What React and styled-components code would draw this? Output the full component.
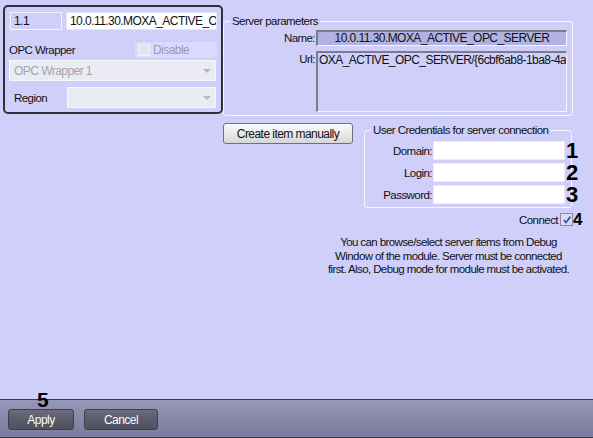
import React from "react";
import styled, { createGlobalStyle } from "styled-components";

const UI_FONT = `"Liberation Sans", Arial, sans-serif`;

const GlobalStyle = createGlobalStyle`
  html, body {
    margin: 0;
    padding: 0;
    background: #cfcff9;
  }
  body {
    font-family: ${UI_FONT};
    font-size: 11.5px;
    letter-spacing: -0.55px;
    color: #111;
  }
`;

const Page = styled.div`
  display: flex;
  flex-direction: column;
  width: 593px;
  height: 438px;
  background: #cfcff9;
  overflow: hidden;
`;

const Main = styled.div`
  flex: 1;
  display: flex;
  align-items: flex-start;
  padding: 5px 0 0 3px;
`;

/* left card with object id / wrapper */
const Panel = styled.div`
  box-sizing: border-box;
  width: 220px;
  height: 109px;
  border: 2px solid #30303c;
  border-radius: 5px;
  padding: 5px 4px 0 5px;
  display: flex;
  flex-direction: column;
`;

const PanelRow = styled.div`
  display: flex;
  align-items: center;
  gap: ${(p) => p.$gap || 0}px;
  margin-top: ${(p) => p.$top || 0}px;
`;

const TextBox = styled.div`
  box-sizing: border-box;
  width: ${(p) => p.$w}px;
  height: 18px;
  padding: 0 3px;
  display: flex;
  align-items: center;
  white-space: nowrap;
  overflow: hidden;
  background: ${(p) => (p.$white ? "#ffffff" : "#cfcff9")};
  border: 1px solid ${(p) => (p.$white ? "#e6e6f6" : "#f4f4ff")};
  font-size: 12px;
`;

const Label = styled.span`
  white-space: nowrap;
  margin-left: ${(p) => p.$ml || 0}px;
  width: ${(p) => (p.$w ? `${p.$w}px` : "auto")};
`;

const DisableBox = styled.label`
  box-sizing: border-box;
  margin-left: auto;
  width: 82px;
  height: 16px;
  display: flex;
  align-items: center;
  gap: 3px;
  padding-left: 3px;
  background: #dadafe;
  color: #9c9cae;
  font-size: 12px;
`;

const FakeCheck = styled.span`
  box-sizing: border-box;
  flex: none;
  width: ${(p) => (p.$disabled ? 12 : 13)}px;
  height: ${(p) => (p.$disabled ? 12 : 13)}px;
  background: ${(p) => (p.$disabled ? "#e4e4ec" : "#dcdcf0")};
  border: 1px solid ${(p) => (p.$disabled ? "#f2f2f8" : "#8a8aa6")};
  display: flex;
  align-items: center;
  justify-content: center;
  position: relative;
`;

const Combo = styled.div`
  box-sizing: border-box;
  width: ${(p) => p.$w}px;
  height: 21px;
  margin-left: ${(p) => p.$ml || 0}px;
  display: flex;
  align-items: center;
  padding: 0 4px;
  background: #ebebf4;
  border: 1px solid #f8f8ff;
  color: #a4a4ae;
  font-size: 12px;
`;

const ComboArrow = styled.span`
  margin-left: auto;
  width: 0;
  height: 0;
  border-left: 4px solid transparent;
  border-right: 4px solid transparent;
  border-top: 4px solid #b8b8c4;
`;

/* right side */
const RightColumn = styled.div`
  box-sizing: border-box;
  width: 351px;
  padding-top: 9px;
  display: flex;
  flex-direction: column;
`;

const Group = styled.fieldset`
  box-sizing: border-box;
  width: ${(p) => p.$w}px;
  margin: 0;
  padding: ${(p) => p.$pad};
  border: 1px solid #f6f6ff;
  border-radius: 3px;
`;

const Legend = styled.legend`
  margin-left: 6px;
  padding: 0 2px;
  line-height: 14px;
`;

const FormGrid = styled.div`
  display: grid;
  grid-template-columns: ${(p) => p.$cols};
  column-gap: 1px;
  row-gap: ${(p) => p.$rowGap}px;
`;

const FormLabel = styled.span`
  text-align: right;
  white-space: nowrap;
  align-self: ${(p) => (p.$top ? "start" : "center")};
  line-height: ${(p) => (p.$top ? "16px" : "normal")};
`;

const ReadOnlyBox = styled.div`
  box-sizing: border-box;
  height: ${(p) => p.$h}px;
  padding: 0 1px;
  background: ${(p) => (p.$dark ? "#b2b2e0" : "#cfcff9")};
  border-top: 2px solid #7c7c88;
  border-left: 2px solid #7c7c88;
  border-right: 1px solid #f4f4ff;
  border-bottom: 1px solid #f4f4ff;
  text-align: ${(p) => (p.$center ? "center" : "left")};
  line-height: ${(p) => (p.$dark ? "13px" : "15px")};
  white-space: nowrap;
  overflow: hidden;
  font-size: 12px;
`;

const InputBox = styled.div`
  box-sizing: border-box;
  height: 19px;
  background: #ffffff;
  border: 1px solid #ececfa;
  position: relative;
`;

const Callout = styled.span`
  position: absolute;
  font-weight: bold;
  letter-spacing: 0;
  font-size: ${(p) => p.$size || 22}px;
  line-height: ${(p) => p.$size || 22}px;
  color: #000;
  left: ${(p) => p.$left ?? "calc(100% + 2px)"};
  top: ${(p) => p.$y ?? "-2px"};
  bottom: ${(p) => p.$bottom ?? "auto"};
`;

const ActionRow = styled.div`
  display: flex;
  align-items: flex-start;
  gap: 11px;
  margin-top: 7px;
`;

const LightButton = styled.button`
  box-sizing: border-box;
  width: 130px;
  height: 21px;
  padding: 0;
  border: 1px solid #70707a;
  border-radius: 3px;
  background: linear-gradient(#fafafa, #e8e8e8 55%, #d6d6d6);
  font-family: ${UI_FONT};
  font-size: 12px;
  letter-spacing: -0.55px;
  color: #111;
`;

const ConnectRow = styled.div`
  display: flex;
  justify-content: flex-end;
  align-items: center;
  gap: 2px;
  margin-top: 5px;
  padding-right: 1px;
  height: 13px;
`;

const Hint = styled.p`
  margin: 10px 0 0;
  padding: 0 0 0 100px;
  text-align: center;
  white-space: nowrap;
  line-height: 13.5px;
  font-size: 11.5px;
  letter-spacing: -0.6px;
`;

/* bottom bar */
const BottomBar = styled.div`
  box-sizing: border-box;
  height: 39px;
  border-top: 1px solid #3a3a4a;
  border-bottom: 1px solid #3c3c48;
  background: linear-gradient(#9797b8, #8585a8 60%, #7c7ca0);
  display: flex;
  gap: 10px;
  padding: 9px 0 0 8px;
`;

const DarkButton = styled.button`
  box-sizing: border-box;
  position: relative;
  width: ${(p) => p.$w}px;
  height: 21px;
  padding: 0;
  border: 1px solid #3e3e4c;
  border-radius: 3px;
  background: linear-gradient(#6c6c7c, #5a5a6a 50%, #50505e);
  color: #fafafa;
  font-family: ${UI_FONT};
  font-size: 12px;
  letter-spacing: -0.55px;
`;

const CheckMark = () => (
  <svg width="10" height="10" viewBox="0 0 10 10">
    <path d="M1.8 5 L4 7.6 L8.4 1.6" fill="none" stroke="#3a58b0" strokeWidth="1.8" />
  </svg>
);

export default function App() {
  return (
    <>
      <GlobalStyle />
      <Page>
        <Main>
          <Panel>
            <PanelRow $gap={4}>
              <TextBox $w={52}>1.1</TextBox>
              <TextBox $w={151} $white>
                10.0.11.30.MOXA_ACTIVE_OPC_SERVER
              </TextBox>
            </PanelRow>
            <PanelRow $top={12}>
              <Label $ml={-1}>OPC Wrapper</Label>
              <DisableBox>
                <FakeCheck $disabled />
                Disable
              </DisableBox>
            </PanelRow>
            <PanelRow $top={2}>
              <Combo $w={207} $ml={-1}>
                OPC Wrapper 1
                <ComboArrow />
              </Combo>
            </PanelRow>
            <PanelRow $top={6}>
              <Label $ml={4} $w={52}>
                Region
              </Label>
              <Combo $w={149} $ml={1}>
                <ComboArrow />
              </Combo>
            </PanelRow>
          </Panel>

          <RightColumn>
            <Group $w={350} $pad="2px 4px 3px 0">
              <Legend>Server parameters</Legend>
              <FormGrid $cols="91px 251px" $rowGap={5}>
                <FormLabel>Name:</FormLabel>
                <ReadOnlyBox $h={16} $dark $center>
                  10.0.11.30.MOXA_ACTIVE_OPC_SERVER
                </ReadOnlyBox>
                <FormLabel $top>Url:</FormLabel>
                <ReadOnlyBox $h={61}>
                  OXA_ACTIVE_OPC_SERVER/{"{"}6cbf6ab8-1ba8-4a2b
                </ReadOnlyBox>
              </FormGrid>
            </Group>

            <ActionRow>
              <LightButton>Create item manually</LightButton>
              <Group $w={208} $pad="4px 6px 3px 0">
                <Legend>User Credentials for server connection</Legend>
                <FormGrid $cols="67px 132px" $rowGap={3}>
                  <FormLabel>Domain:</FormLabel>
                  <InputBox>
                    <Callout>1</Callout>
                  </InputBox>
                  <FormLabel>Login:</FormLabel>
                  <InputBox>
                    <Callout>2</Callout>
                  </InputBox>
                  <FormLabel>Password:</FormLabel>
                  <InputBox>
                    <Callout>3</Callout>
                  </InputBox>
                </FormGrid>
              </Group>
            </ActionRow>

            <ConnectRow>
              <span>Connect</span>
              <FakeCheck>
                <CheckMark />
                <Callout $size={17} $left="calc(100% + 1px)" $y="-3px">
                  4
                </Callout>
              </FakeCheck>
            </ConnectRow>

            <Hint>
              You can browse/select server items from Debug
              <br />
              Window of the module. Server must be connected
              <br />
              first. Also, Debug mode for module must be activated.
            </Hint>
          </RightColumn>
        </Main>

        <BottomBar>
          <DarkButton $w={66}>
            Apply
            <Callout $size={21} $left="28px" $y="auto" $bottom="100%">
              5
            </Callout>
          </DarkButton>
          <DarkButton $w={74}>Cancel</DarkButton>
        </BottomBar>
      </Page>
    </>
  );
}
